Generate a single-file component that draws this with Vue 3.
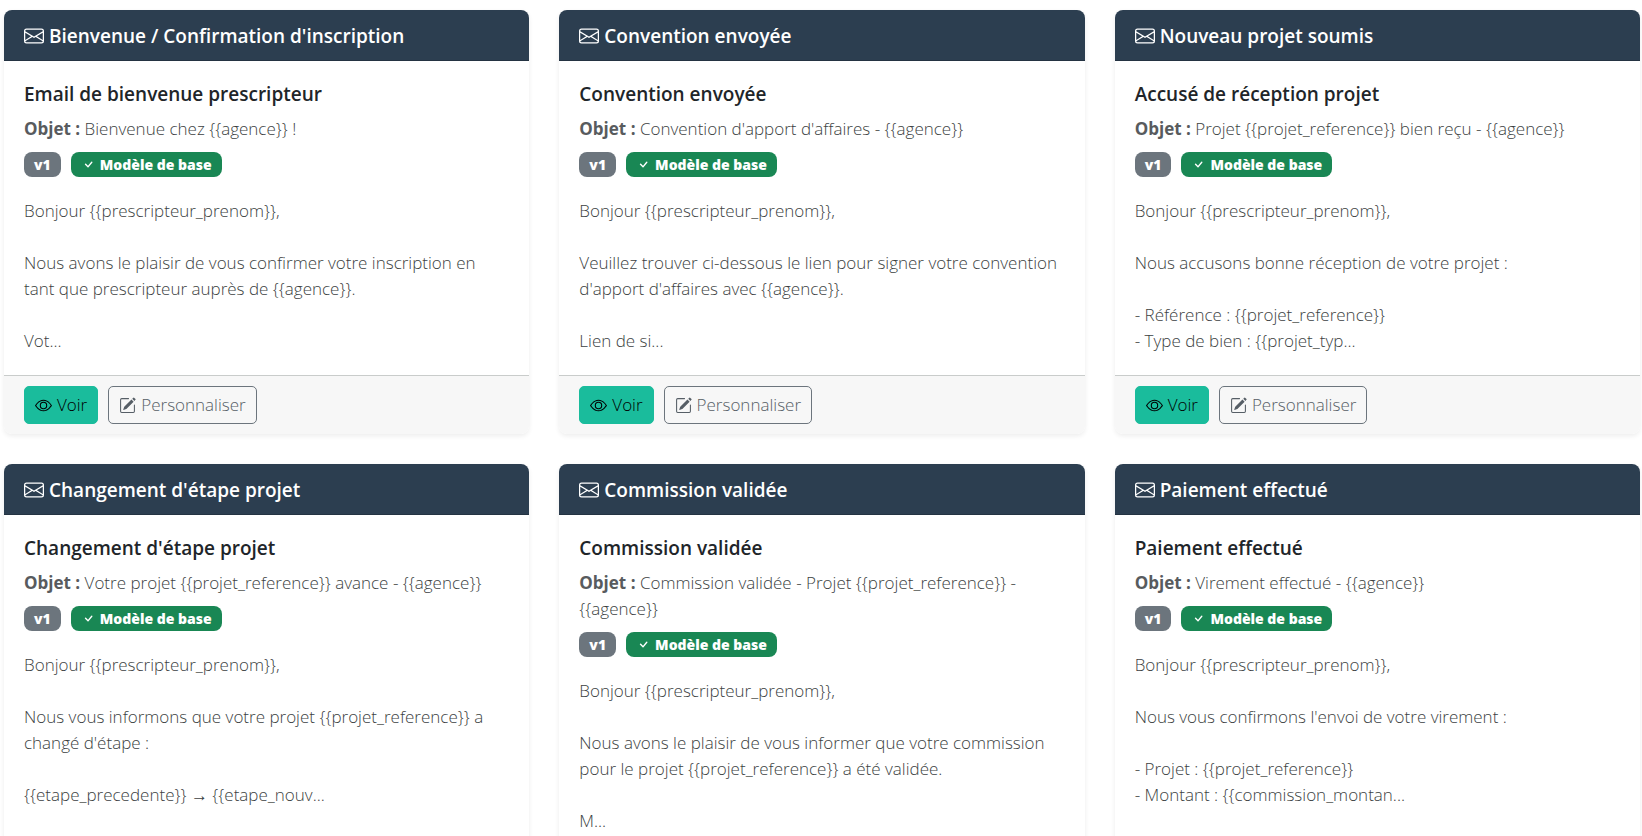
<template>
  <main class="template-grid">
    <article v-for="tpl in templates" :key="tpl.id" class="template-card">
      <header class="template-card__header">
        <svg class="icon" viewBox="0 0 16 16" fill="currentColor" aria-hidden="true">
          <path d="M0 4a2 2 0 0 1 2-2h12a2 2 0 0 1 2 2v8a2 2 0 0 1-2 2H2a2 2 0 0 1-2-2V4Zm2-1a1 1 0 0 0-1 1v.217l7 4.2 7-4.2V4a1 1 0 0 0-1-1H2Zm13 2.383-4.708 2.825L15 11.105V5.383Zm-.034 6.876-5.64-3.471L8 9.583l-1.326-.795-5.64 3.47A1 1 0 0 0 2 13h12a1 1 0 0 0 .966-.741ZM1 11.105l4.708-2.897L1 5.383v5.722Z" />
        </svg>
        <span>{{ tpl.event }}</span>
      </header>

      <div class="template-card__body">
        <h2 class="template-card__title">{{ tpl.name }}</h2>
        <p class="template-card__subject">
          <strong>Objet :</strong> {{ tpl.subject }}
        </p>
        <div class="badges">
          <span class="badge badge--version">v{{ tpl.version }}</span>
          <span class="badge badge--base">
            <svg class="icon" viewBox="0 0 16 16" fill="currentColor" aria-hidden="true">
              <path d="M10.97 4.97a.75.75 0 0 1 1.07 1.05l-3.99 4.99a.75.75 0 0 1-1.08.02L4.324 8.384a.75.75 0 1 1 1.06-1.06l2.094 2.093 3.473-4.425a.267.267 0 0 1 .02-.022z" />
            </svg>
            Modèle de base
          </span>
        </div>
        <p class="template-card__preview">{{ tpl.body }}...</p>
      </div>

      <footer class="template-card__footer">
        <button type="button" class="btn btn--primary">
          <svg class="icon" viewBox="0 0 16 16" fill="currentColor" aria-hidden="true">
            <path d="M16 8s-3-5.500-8-5.500S0 8 0 8s3 5.500 8 5.500S16 8 16 8zM1.173 8a13.133 13.133 0 0 1 1.660-2.043C4.120 4.668 5.880 3.500 8 3.500c2.120 0 3.879 1.168 5.168 2.457A13.133 13.133 0 0 1 14.828 8c-.058.087-.122.183-.195.288-.335.480-.830 1.120-1.465 1.755C11.879 11.332 10.119 12.500 8 12.500c-2.120 0-3.879-1.168-5.168-2.457A13.134 13.134 0 0 1 1.172 8z" />
            <path d="M8 5.500a2.500 2.500 0 1 0 0 5 2.500 2.500 0 0 0 0-5zM4.500 8a3.500 3.500 0 1 1 7 0 3.500 3.500 0 0 1-7 0z" />
          </svg>
          Voir
        </button>
        <button type="button" class="btn btn--outline">
          <svg class="icon" viewBox="0 0 16 16" fill="currentColor" aria-hidden="true">
            <path d="M15.502 1.940a.5.5 0 0 1 0 .706L14.459 3.690l-2-2L13.502.646a.5.5 0 0 1 .707 0l1.293 1.293zm-1.750 2.456-2-2L4.939 9.210a.5.5 0 0 0-.121.196l-.805 2.414a.25.25 0 0 0 .316.316l2.414-.805a.5.5 0 0 0 .196-.120l6.813-6.814z" />
            <path fill-rule="evenodd" d="M1 13.500A1.500 1.500 0 0 0 2.500 15h11a1.500 1.500 0 0 0 1.500-1.500v-6a.5.5 0 0 0-1 0v6a.5.5 0 0 1-.5.5h-11a.5.5 0 0 1-.5-.5v-11a.5.5 0 0 1 .5-.5H9a.5.5 0 0 0 0-1H2.500A1.500 1.500 0 0 0 1 2.500v11z" />
          </svg>
          Personnaliser
        </button>
      </footer>
    </article>
  </main>
</template>

<script setup>
import { ref } from 'vue'

const templates = ref([
  {
    id: 'bienvenue',
    event: "Bienvenue / Confirmation d'inscription",
    name: 'Email de bienvenue prescripteur',
    subject: 'Bienvenue chez {{agence}} !',
    version: 1,
    body: 'Bonjour {{prescripteur_prenom}},\n\nNous avons le plaisir de vous confirmer votre inscription en tant que prescripteur auprès de {{agence}}.\n\nVot',
  },
  {
    id: 'convention',
    event: 'Convention envoyée',
    name: 'Convention envoyée',
    subject: "Convention d'apport d'affaires - {{agence}}",
    version: 1,
    body: "Bonjour {{prescripteur_prenom}},\n\nVeuillez trouver ci-dessous le lien pour signer votre convention d'apport d'affaires avec {{agence}}.\n\nLien de si",
  },
  {
    id: 'projet_soumis',
    event: 'Nouveau projet soumis',
    name: 'Accusé de réception projet',
    subject: 'Projet {{projet_reference}} bien reçu - {{agence}}',
    version: 1,
    body: 'Bonjour {{prescripteur_prenom}},\n\nNous accusons bonne réception de votre projet :\n\n- Référence : {{projet_reference}}\n- Type de bien : {{projet_typ',
  },
  {
    id: 'changement_etape',
    event: "Changement d'étape projet",
    name: "Changement d'étape projet",
    subject: 'Votre projet {{projet_reference}} avance - {{agence}}',
    version: 1,
    body: "Bonjour {{prescripteur_prenom}},\n\nNous vous informons que votre projet {{projet_reference}} a changé d'étape :\n\n{{etape_precedente}} → {{etape_nouv",
  },
  {
    id: 'commission',
    event: 'Commission validée',
    name: 'Commission validée',
    subject: 'Commission validée - Projet {{projet_reference}} - {{agence}}',
    version: 1,
    body: 'Bonjour {{prescripteur_prenom}},\n\nNous avons le plaisir de vous informer que votre commission pour le projet {{projet_reference}} a été validée.\n\nM',
  },
  {
    id: 'paiement',
    event: 'Paiement effectué',
    name: 'Paiement effectué',
    subject: 'Virement effectué - {{agence}}',
    version: 1,
    body: "Bonjour {{prescripteur_prenom}},\n\nNous vous confirmons l'envoi de votre virement :\n\n- Projet : {{projet_reference}}\n- Montant : {{commission_montan",
  },
])
</script>

<style>
body {
  margin: 0;
  background: #fff;
}
</style>

<style scoped>
.template-grid {
  display: grid;
  grid-template-columns: repeat(3, minmax(0, 1fr));
  gap: 30px;
  padding: 10px 2px 30px 4px;
  font-family: 'Open Sans', 'Noto Sans', sans-serif;
  font-size: 17px;
  font-weight: 300;
  line-height: 26px;
  color: #212529;
}

.template-card {
  display: flex;
  flex-direction: column;
  background: #fff;
  border-radius: 8px;
  box-shadow: 0 2px 5px rgba(0, 0, 0, 0.075);
  overflow: hidden;
}

.template-card__header {
  display: flex;
  align-items: center;
  gap: 5px;
  padding: 11px 20px 9px;
  border-bottom: 1px solid #243342;
  background: #2c3e50;
  color: #fff;
  font-size: 19px;
  font-weight: 600;
  line-height: 30px;
}

.template-card__header .icon {
  width: 20px;
  height: 20px;
}

.icon {
  flex: none;
}

.template-card__body {
  flex: 1;
  padding: 21px 20px;
}

.template-card__title {
  margin: 0 0 10px;
  font-size: 19px;
  font-weight: 600;
  line-height: 24px;
}

.template-card__subject {
  margin: 0 0 9px;
  color: #3c3f42;
}

.template-card__subject strong {
  color: #585b5e;
  font-weight: 700;
}

.badges {
  display: flex;
  align-items: flex-end;
  gap: 10px;
  height: 26px;
  margin-bottom: 21px;
}

.badge {
  display: flex;
  align-items: center;
  gap: 4px;
  padding: 0 10px;
  border-radius: 8px;
  color: #fff;
  font-size: 14px;
  font-weight: 800;
  line-height: 25px;
}

.badge .icon {
  width: 15px;
  height: 15px;
}

.badge--version {
  background: #6c757d;
}

.badge--base {
  background: #198754;
}

.template-card__preview {
  margin: 0;
  color: #3c3f42;
  white-space: pre-line;
}

.template-card__footer {
  display: flex;
  gap: 10px;
  padding: 10px 20px;
  border-top: 1px solid #c9cccb;
  background: #f7f7f7;
}

.btn {
  display: flex;
  align-items: center;
  gap: 5px;
  padding: 5px 10px;
  border: 1px solid transparent;
  border-radius: 5px;
  font: inherit;
  cursor: pointer;
}

.btn .icon {
  width: 17px;
  height: 17px;
}

.btn--primary {
  border-color: #1abc9c;
  background: #1abc9c;
  color: #000;
}

.btn--outline {
  border-color: #6c757d;
  background: transparent;
  color: #565e66;
}

.btn--primary:hover {
  background: #16a085;
}

.btn--outline:hover {
  background: #6c757d;
  color: #fff;
}

@media (max-width: 992px) {
  .template-grid {
    grid-template-columns: repeat(2, minmax(0, 1fr));
  }
}

@media (max-width: 640px) {
  .template-grid {
    grid-template-columns: 1fr;
  }
}
</style>
